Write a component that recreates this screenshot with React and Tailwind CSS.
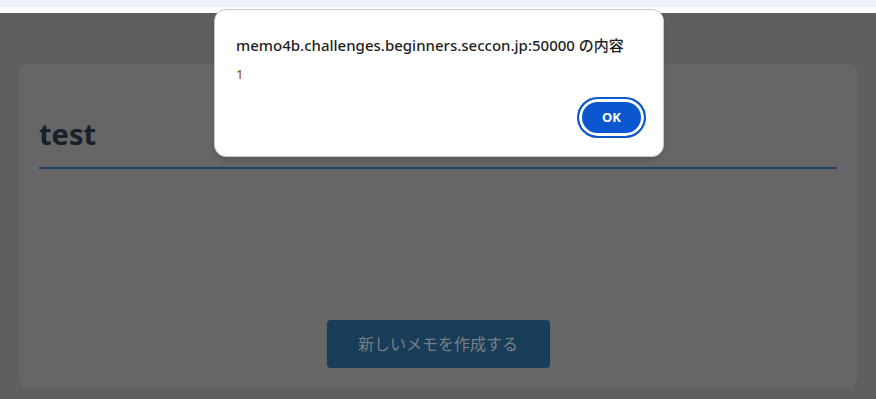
export default function App() {
  return (
    <div className="relative w-[876px] h-[399px] overflow-hidden bg-[#5f5f5f] font-['Noto_Sans','Noto_Sans_CJK_JP',sans-serif]">
      <div className="h-[7px] bg-[#eef2fa]" />
      <div className="h-[6px] bg-white" />
      <div className="px-[19px] pt-[51px]">
        <div className="h-[324px] rounded-lg bg-[#666666] px-5 pt-[50px] flex flex-col">
          <h1 className="text-[29px] leading-[40px] font-bold text-[#17202b]">test</h1>
          <div className="mt-[13px] h-[2px] bg-[#1d4466]" />
          <div className="flex-1 flex items-end justify-center pb-[20px]">
            <button className="w-[223px] h-[48px] rounded bg-[#173d58] text-[#7b7e82] text-[16px]">
              新しいメモを作成する
            </button>
          </div>
        </div>
      </div>

      <div className="absolute left-[214px] top-[9px] w-[450px] h-[148px] rounded-xl bg-white border border-[#c8c8c8] shadow-md pl-[21px] pr-[17px] pt-[24px] font-['Noto_Sans','Noto_Sans_CJK_JP',sans-serif]">
        <p className="text-[15px] leading-[22px] text-[#1f1f1f] font-medium">
          memo4b.challenges.beginners.seccon.jp:50000 の内容
        </p>
        <p className="mt-[9px] text-[13px] leading-[18px] text-[#a8600c] font-medium">1</p>
        <div className="flex justify-end mt-[14px]">
          <button className="w-[69px] h-[41px] rounded-full bg-[#0b57d0] border-2 border-[#0b57d0] ring-[3px] ring-inset ring-white text-white text-[13px] font-bold">
            OK
          </button>
        </div>
      </div>
    </div>
  );
}
